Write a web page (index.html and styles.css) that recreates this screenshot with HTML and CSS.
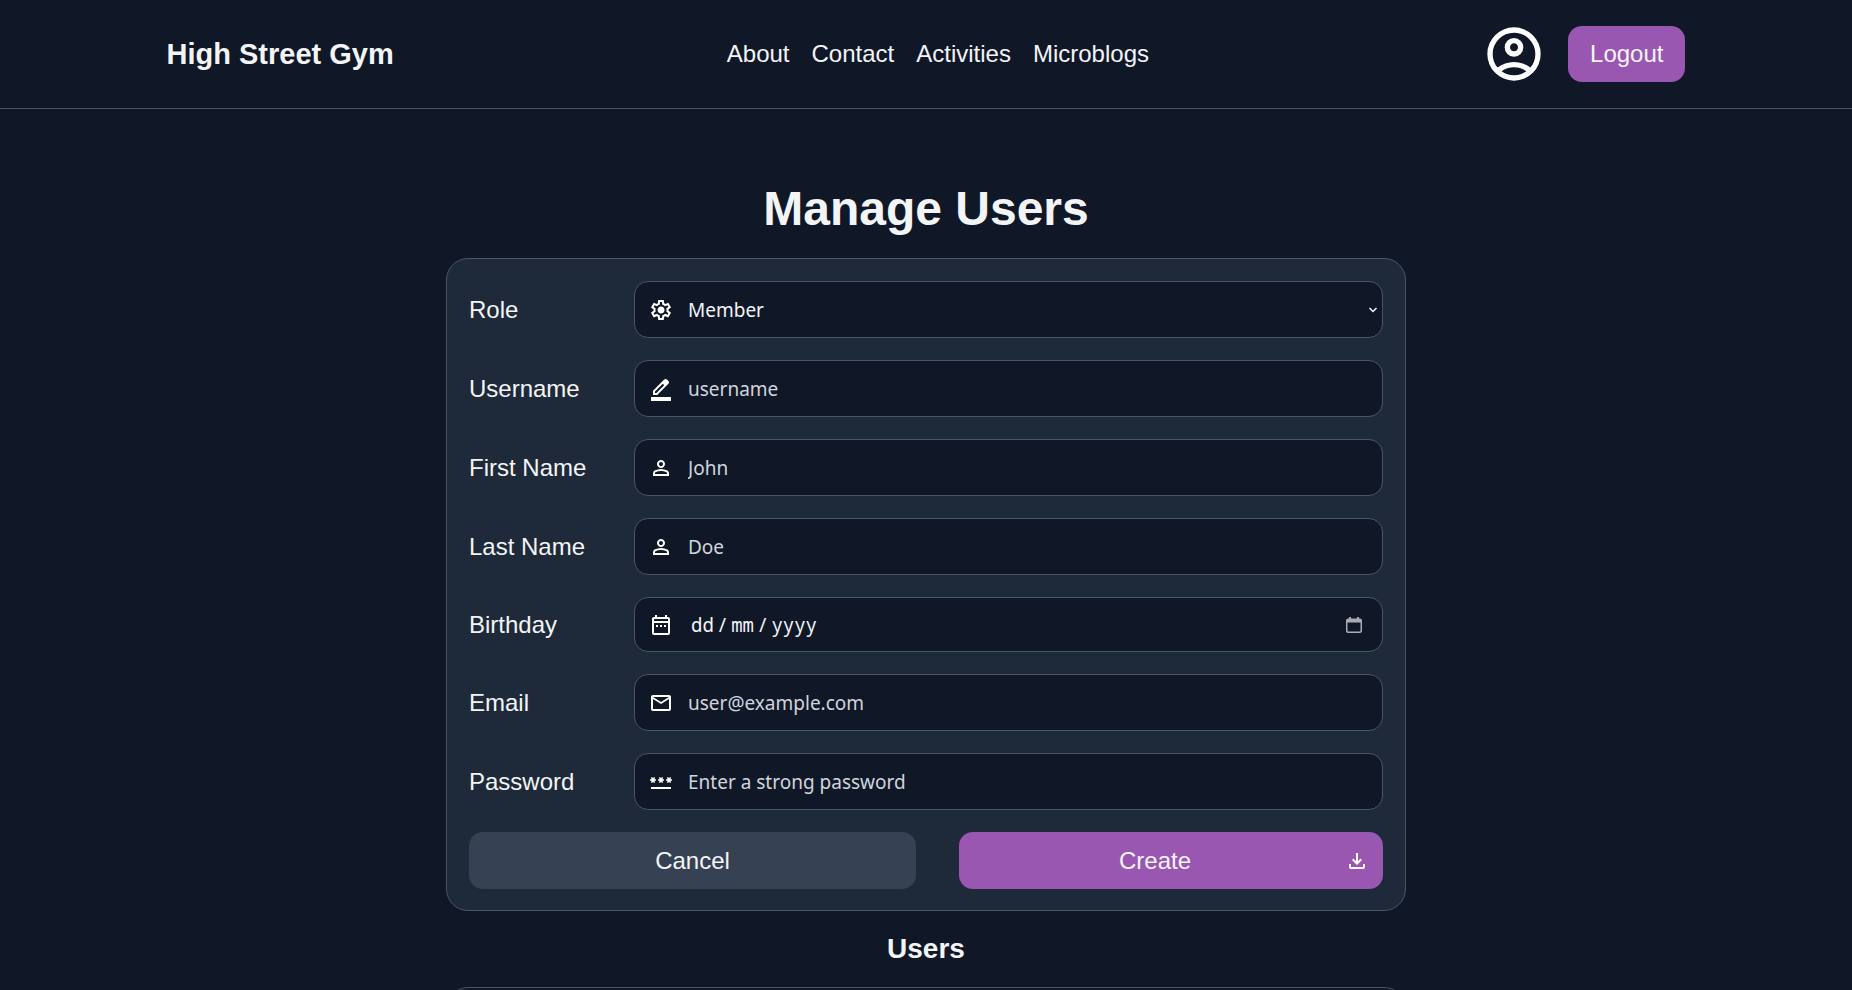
FILE: index.html
```html
<!DOCTYPE html>
<html lang="en-AU">
<head>
<meta charset="utf-8">
<meta name="viewport" content="width=device-width, initial-scale=1">
<title>High Street Gym - Manage Users</title>
<link rel="stylesheet" href="styles.css">
</head>
<body>
<header class="site-header">
  <a class="brand" href="#">High Street Gym</a>
  <nav class="site-nav">
    <a href="#">About</a>
    <a href="#">Contact</a>
    <a href="#">Activities</a>
    <a href="#">Microblogs</a>
  </nav>
  <div class="account">
    <a class="avatar" href="#" aria-label="Account"><svg viewBox="0 0 24 24"><path d="M5.85 17.1q1.275-.975 2.85-1.537T12 15t3.3.563t2.85 1.537q.875-1.025 1.363-2.325T20 12q0-3.325-2.337-5.663T12 4T6.337 6.338T4 12q0 1.475.488 2.775T5.85 17.1M12 13q-1.475 0-2.488-1.012T8.5 9.5t1.013-2.488T12 6t2.488 1.013T15.5 9.5t-1.012 2.488T12 13m0 9q-2.075 0-3.9-.788t-3.175-2.137T2.788 15.9T2 12t.788-3.9t2.137-3.175T8.1 2.788T12 2t3.9.788t3.175 2.137T21.213 8.1T22 12t-.788 3.9t-2.137 3.175t-3.175 2.138T12 22m0-2q1.325 0 2.5-.387t2.15-1.113q-.975-.725-2.15-1.112T12 17t-2.5.388T7.35 18.5q.975.725 2.15 1.113T12 20m0-9q.65 0 1.075-.425T13.5 9.5t-.425-1.075T12 8t-1.075.425T10.5 9.5t.425 1.075T12 11"/></svg></a>
    <button class="btn btn-primary" type="button">Logout</button>
  </div>
</header>
<main class="page">
  <h1>Manage Users</h1>
  <form class="card">
    <div class="row">
      <label for="role">Role</label>
      <div class="field field-select">
        <svg viewBox="0 0 24 24"><path d="m9.25 22l-.4-3.2q-.325-.125-.612-.3t-.563-.375L4.7 19.375l-2.75-4.75l2.575-1.95Q4.5 12.5 4.5 12.338v-.675q0-.163.025-.338L1.95 9.375l2.75-4.75l2.975 1.25q.275-.2.575-.375t.6-.3l.4-3.2h5.5l.4 3.2q.325.125.613.3t.562.375l2.975-1.25l2.75 4.75l-2.575 1.95q.025.175.025.338v.674q0 .163-.05.338l2.575 1.95l-2.75 4.75l-2.95-1.25q-.275.2-.575.375t-.6.3l-.4 3.2zm1.75-2h1.975l.35-2.65q.775-.2 1.438-.587t1.212-.938l2.475 1.025l.975-1.7l-2.15-1.625q.125-.35.175-.737T17.5 12t-.05-.787t-.175-.738l2.15-1.625l-.975-1.7l-2.475 1.05q-.55-.575-1.212-.962t-1.438-.588L13 4h-1.975l-.35 2.65q-.775.2-1.437.588t-1.213.937L5.55 7.15l-.975 1.7l2.15 1.6q-.125.375-.175.75t-.05.8q0 .4.05.775t.175.75l-2.15 1.625l.975 1.7l2.475-1.05q.55.575 1.213.963t1.437.587zm1.05-4.5q1.45 0 2.475-1.025T15.55 12t-1.025-2.475T12.05 8.5q-1.475 0-2.487 1.025T8.55 12t1.013 2.475T12.05 15.5"/></svg>
        <select id="role"><option>Member</option><option>Trainer</option><option>Manager</option></select>
        <svg class="chevron" viewBox="0 0 10 10"><path d="M1.5 3 5 6.5 8.5 3"/></svg>
      </div>
    </div>
    <div class="row">
      <label for="username">Username</label>
      <div class="field">
        <svg viewBox="0 0 24 24"><path d="M2 24v-4h20v4zM4 18v-4.25l11.175-11.2q.275-.275.638-.413T16.575 2q.4 0 .775.15t.675.45L19.4 4q.3.275.438.65T19.975 5.4q0 .375-.137.737t-.438.663L8.25 18zm2-2h1.4l7.8-7.775l-.7-.725l-.7-.7L6 14.575z"/></svg>
        <input id="username" type="text" placeholder="username">
      </div>
    </div>
    <div class="row">
      <label for="first-name">First Name</label>
      <div class="field">
        <svg viewBox="0 0 24 24"><path d="M12 12q-1.65 0-2.825-1.175T8 8t1.175-2.825T12 4t2.825 1.175T16 8t-1.175 2.825T12 12m-8 8v-2.8q0-.85.438-1.562T5.6 14.55q1.55-.775 3.15-1.162T12 13t3.25.388t3.15 1.162q.725.375 1.163 1.088T20 17.2V20zm2-2h12v-.8q0-.275-.137-.5t-.363-.35q-1.35-.675-2.725-1.012T12 15t-2.775.338T6.5 16.35q-.225.125-.363.35T6 17.2zm6-8q.825 0 1.413-.587T14 8t-.587-1.412T12 6t-1.412.588T10 8t.588 1.413T12 10"/></svg>
        <input id="first-name" type="text" placeholder="John">
      </div>
    </div>
    <div class="row">
      <label for="last-name">Last Name</label>
      <div class="field">
        <svg viewBox="0 0 24 24"><path d="M12 12q-1.65 0-2.825-1.175T8 8t1.175-2.825T12 4t2.825 1.175T16 8t-1.175 2.825T12 12m-8 8v-2.8q0-.85.438-1.562T5.6 14.55q1.55-.775 3.15-1.162T12 13t3.25.388t3.15 1.162q.725.375 1.163 1.088T20 17.2V20zm2-2h12v-.8q0-.275-.137-.5t-.363-.35q-1.35-.675-2.725-1.012T12 15t-2.775.338T6.5 16.35q-.225.125-.363.35T6 17.2zm6-8q.825 0 1.413-.587T14 8t-.587-1.412T12 6t-1.412.588T10 8t.588 1.413T12 10"/></svg>
        <input id="last-name" type="text" placeholder="Doe">
      </div>
    </div>
    <div class="row">
      <label for="birthday">Birthday</label>
      <div class="field field-date">
        <svg viewBox="0 0 24 24"><path d="M5 22q-.825 0-1.412-.587T3 20V6q0-.825.588-1.412T5 4h1V2h2v2h8V2h2v2h1q.825 0 1.413.588T21 6v14q0 .825-.587 1.413T19 22zm0-2h14V10H5zM5 8h14V6H5zM7 12h2v2H7zm4 0h2v2h-2zm4 0h2v2h-2z" fill-rule="evenodd"/></svg>
        <div class="date-parts">
          <input id="birthday" class="part" type="text" inputmode="numeric" maxlength="2" placeholder="dd" aria-label="Birthday, day">
          <span>/</span>
          <input class="part" type="text" inputmode="numeric" maxlength="2" placeholder="mm" aria-label="Birthday, month">
          <span>/</span>
          <input class="part part-year" type="text" inputmode="numeric" maxlength="4" placeholder="yyyy" aria-label="Birthday, year">
        </div>
        <button class="picker" type="button" aria-label="Open calendar"><svg viewBox="0 0 16 16"><path d="M3 0h2v1.500h6V0h2v1.500h1q2 0 2 2V14q0 2-2 2H2q-2 0-2-2V3.500q0-2 2-2h1zM1.500 5.500V13.500q0 1 1 1h11q1 0 1-1V5.500z" fill-rule="evenodd"/></svg></button>
      </div>
    </div>
    <div class="row">
      <label for="email">Email</label>
      <div class="field">
        <svg viewBox="0 0 24 24"><path d="M4 20q-.825 0-1.412-.587T2 18V6q0-.825.588-1.412T4 4h16q.825 0 1.413.588T22 6v12q0 .825-.587 1.413T20 20zm8-7L4 8v10h16V8zm0-2l8-5H4zM4 8V6v12z"/></svg>
        <input id="email" type="email" placeholder="user@example.com">
      </div>
    </div>
    <div class="row">
      <label for="password">Password</label>
      <div class="field">
        <svg viewBox="0 0 24 24"><path d="M2 19v-2h20v2zM3.150 12.950l-1.300-.750l.850-1.500H1V9.200h1.700l-.850-1.450L3.150 7L4 8.450L4.850 7l1.300.750L5.300 9.200H7v1.500H5.300l.850 1.500l-1.300.750L4 11.450zM11.150 12.950l-1.300-.750l.850-1.500H9V9.200h1.700l-.850-1.450l1.300-.750l.850 1.450l.850-1.450l1.300.750l-.850 1.450H15v1.500h-1.700l.850 1.500l-1.300.750l-.850-1.500zM19.150 12.950l-1.300-.750l.850-1.500H17V9.200h1.700l-.850-1.450l1.300-.750l.850 1.450l.850-1.450l1.300.750l-.850 1.450H23v1.500h-1.700l.850 1.500l-1.300.750l-.850-1.500z"/></svg>
        <input id="password" type="password" placeholder="Enter a strong password">
      </div>
    </div>
    <div class="actions">
      <button class="btn btn-neutral" type="reset">Cancel</button>
      <button class="btn btn-primary btn-icon" type="button"><span>Create</span><svg viewBox="0 0 24 24"><path d="m12 16l-5-5l1.400-1.450l2.600 2.600V4h2v8.150l2.600-2.600L17 11zm-6 4q-.825 0-1.412-.587T4 18v-3h2v3h12v-3h2v3q0 .825-.587 1.413T18 20z"/></svg></button>
    </div>
  </form>
  <h2>Users</h2>
  <section class="user-list" aria-label="Users"></section>
</main>
</body>
</html>
```

FILE: styles.css
```css
* {
  box-sizing: border-box;
}

body {
  margin: 0;
  height: 100vh;
  overflow: hidden;
  background: #101828;
  color: #f3f4f6;
  font-family: "Liberation Sans", Arial, sans-serif;
  font-size: 24px;
}

svg {
  display: block;
  flex: none;
  width: 24px;
  height: 24px;
  fill: #fff;
}

.site-header {
  display: flex;
  align-items: center;
  justify-content: space-around;
  padding: 22px 0;
  border-bottom: 1px solid #4a5565;
}

.brand,
.site-nav a {
  color: inherit;
  text-decoration: none;
}

.brand {
  font-size: 29px;
  font-weight: bold;
}

.site-nav,
.account {
  display: flex;
  align-items: center;
  gap: 22px;
}

.avatar svg {
  width: 64px;
  height: 64px;
}

.btn {
  padding: 14px 22px;
  border: 0;
  border-radius: 14px;
  color: #f3f4f6;
  font: inherit;
  line-height: 28px;
}

.btn-primary {
  background: #9a57b2;
}

.btn-neutral {
  background: #364153;
}

.page {
  width: 100%;
  max-width: 960px;
  margin: 0 auto;
  padding-top: 64px;
}

h1 {
  margin: 0 0 13px;
  font-size: 48px;
  line-height: 72px;
  text-align: center;
}

h2 {
  margin: 16px 0;
  font-size: 28px;
  line-height: 44px;
  text-align: center;
}

.card {
  display: grid;
  gap: 22px;
  padding: 22px 22px 21px;
  border: 1px solid #4a5565;
  border-radius: 22px;
  background: #1e2939;
}

.row {
  display: grid;
  grid-template-columns: 143px 1fr;
  align-items: center;
  gap: 22px;
}

.field {
  position: relative;
  display: flex;
  align-items: center;
  gap: 15px;
  height: 57px;
  padding: 0 14px;
  border: 1px solid #4a5565;
  border-radius: 14px;
  background: #101828;
}

.field-select {
  padding-right: 0;
}

.field-date {
  height: 55px;
  padding-right: 20px;
}

.field input,
.field select {
  flex: 1;
  min-width: 0;
  height: 100%;
  padding: 0;
  border: 0;
  outline: 0;
  appearance: none;
  background: transparent;
  color: #f3f4f6;
  font-family: "Noto Sans", sans-serif;
  font-size: 19px;
}

.field select {
  border-radius: 14px;
}

.field input::placeholder {
  color: #d1d5dc;
  opacity: 1;
}

.chevron {
  position: absolute;
  top: 50%;
  right: 4px;
  width: 10px;
  height: 10px;
  margin-top: -5px;
  fill: none;
  stroke: #f3f4f6;
  stroke-width: 1.5;
  pointer-events: none;
}

.date-parts {
  display: flex;
  flex: 1;
  align-items: center;
  gap: 3px;
  padding-left: 3px;
  font-family: "Noto Sans Mono", "DejaVu Sans Mono", monospace;
  font-size: 19px;
}

.field .part {
  flex: none;
  width: 2ch;
  font-family: inherit;
}

.field .part-year {
  width: 4ch;
}

.field .part::placeholder {
  color: #f3f4f6;
}

.picker {
  padding: 0;
  border: 0;
  background: none;
}

.picker svg {
  width: 16px;
  height: 16px;
  fill: #a9acb3;
}

.actions {
  display: grid;
  grid-template-columns: 447fr 424fr;
  gap: 43px;
}

.actions .btn {
  min-height: 57px;
}

.btn-icon {
  display: flex;
  align-items: center;
  gap: 8px;
  padding: 14px;
}

.btn-icon span {
  flex: 1;
}

.user-list {
  height: 240px;
  border: 1px solid #4a5565;
  border-radius: 22px;
}
```
